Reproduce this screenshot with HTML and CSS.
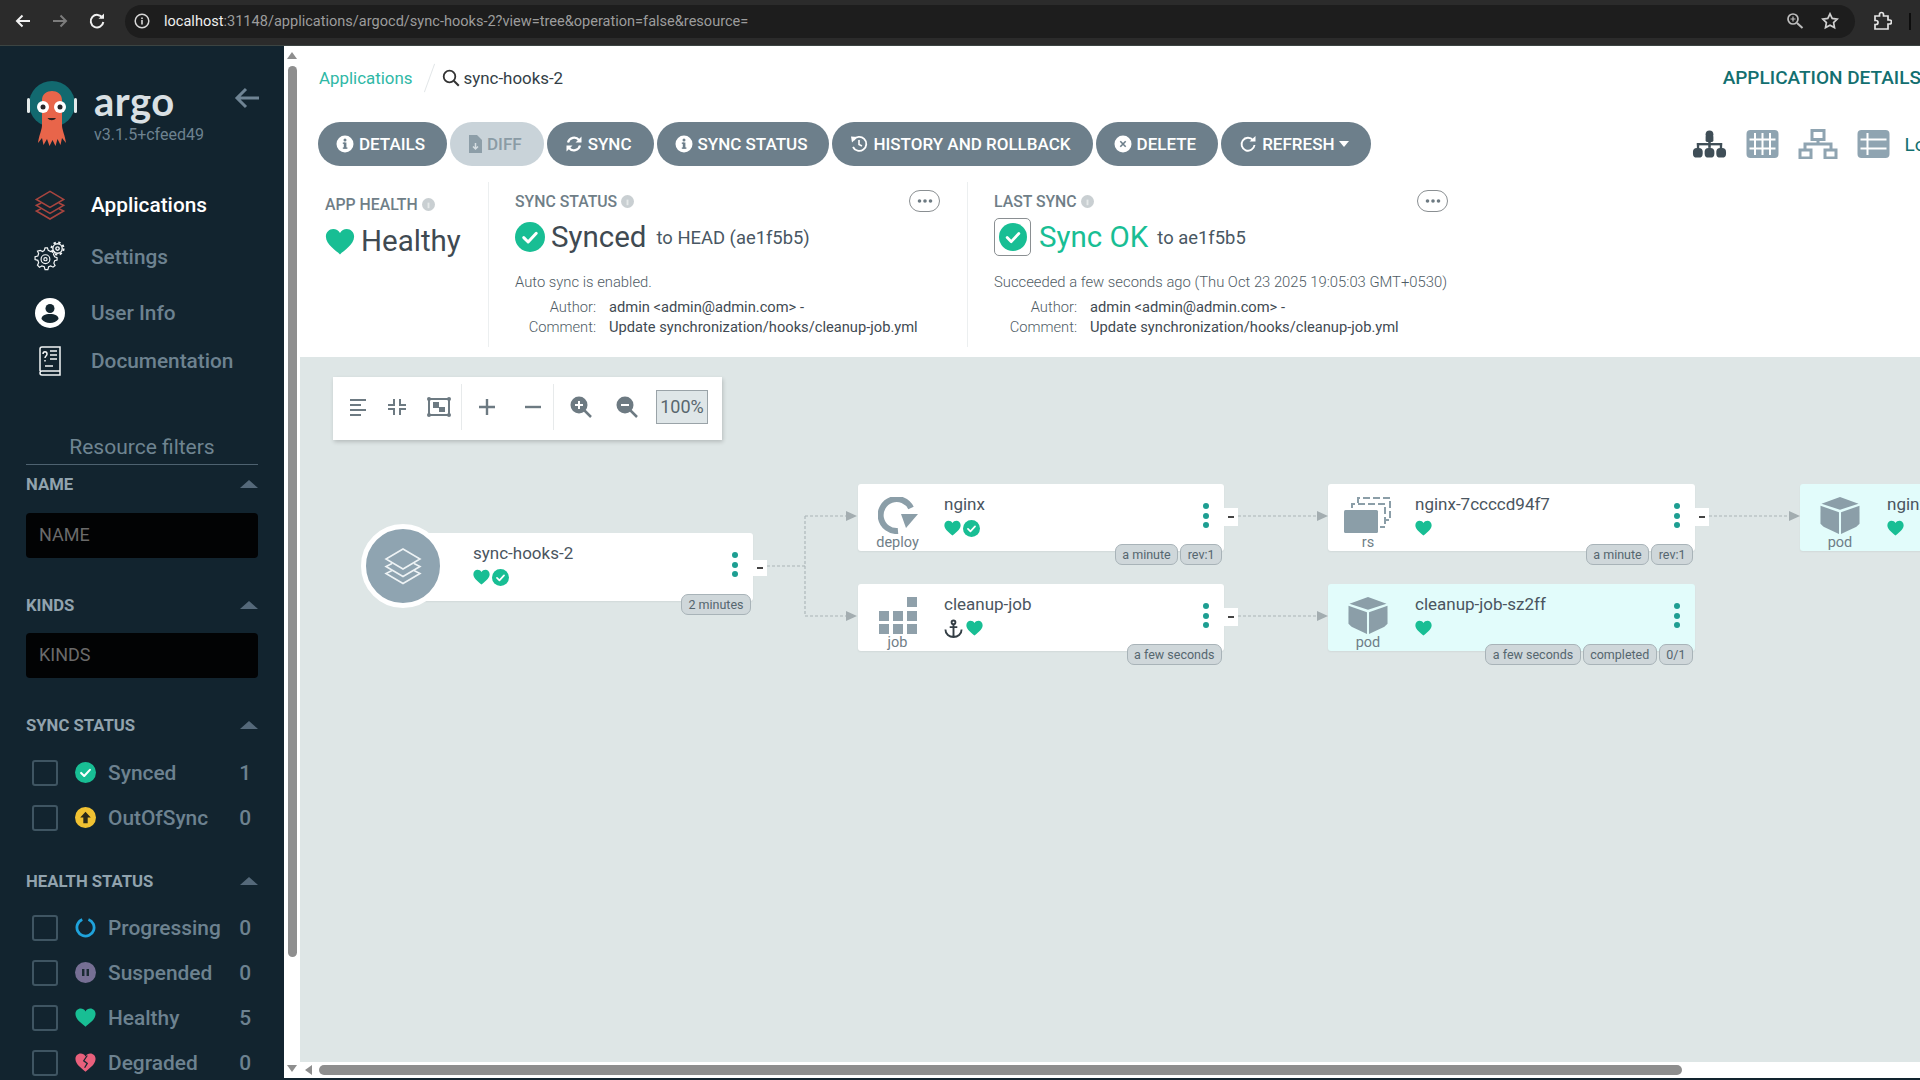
FILE: index.html
```html
<!DOCTYPE html>
<html lang="en">
<head>
<meta charset="utf-8">
<title>sync-hooks-2 - Argo CD</title>
<link rel="stylesheet" href="styles.css">
</head>
<body>
<svg class="defs" width="0" height="0" aria-hidden="true">
  <symbol id="heart" viewBox="0 0 24 22"><path d="M12 21.5C9 18.6 .5 13.6.5 7 .5 3.4 3.2.8 6.5.8c2.300 0 4.300 1.200 5.500 3.200C13.200 2 15.200.8 17.500.8c3.300 0 6 2.600 6 6.200 0 6.600-8.500 11.600-11.500 14.500z"/></symbol>
  <symbol id="check" viewBox="0 0 24 24"><circle cx="12" cy="12" r="12" fill="#18be94"/><path d="M7 12.500l3.500 3.500L17 9" fill="none" stroke="#fff" stroke-width="2.400" stroke-linecap="round" stroke-linejoin="round"/></symbol>
  <symbol id="info" viewBox="0 0 18 18"><circle cx="9" cy="9" r="8.500" fill="currentColor"/><rect x="7.800" y="7.500" width="2.600" height="6" fill="#6d7f8b"/><rect x="6.800" y="7.500" width="2" height="1.400" fill="#6d7f8b"/><rect x="6.800" y="12.400" width="4.600" height="1.400" fill="#6d7f8b"/><circle cx="9" cy="5" r="1.500" fill="#6d7f8b"/></symbol>
  <symbol id="help" viewBox="0 0 14 14"><circle cx="7" cy="7" r="7" fill="#c9cfd2"/><rect x="6" y="5" width="2" height="6" fill="#e6e9ea"/></symbol>
  <symbol id="dots3" viewBox="0 0 16 4"><circle cx="2.500" cy="2" r="1.800"/><circle cx="8" cy="2" r="1.800"/><circle cx="13.500" cy="2" r="1.800"/></symbol>
  <symbol id="pod" viewBox="0 0 38 36"><path d="M19 0L37 6.500 19 12.500 1 6.500z"/><path d="M0 8.500l18 6.300V36L3 29 0 26z"/><path d="M38 8.500l-18 6.300V36l15-7 3-3z"/></symbol>
  <symbol id="stack" viewBox="0 0 40 40"><path d="M20 3L37 13 20 23 3 13z"/><path d="M9 17.500L3 20.500 20 30.500 37 20.500 31 17.500"/><path d="M9 24.500L3 27.500 20 37.500 37 27.500 31 24.500"/></symbol>
</svg>
<div class="app">
  <header class="chrome">
    <svg class="chrome-icon" viewBox="0 0 18 18"><path d="M16 9H3M8.500 3.500L3 9l5.500 5.500" fill="none" stroke="#f1f1f1" stroke-width="2"/></svg>
    <svg class="chrome-icon" viewBox="0 0 18 18"><path d="M2 9h13M9.500 3.500L15 9l-5.500 5.500" fill="none" stroke="#7c7c7c" stroke-width="2"/></svg>
    <svg class="chrome-icon" viewBox="0 0 18 18"><path d="M14.500 6A6.300 6.300 0 1 0 15.300 10" fill="none" stroke="#f1f1f1" stroke-width="2"/><path d="M10.500 6.800H16V1.500z" fill="#f1f1f1"/></svg>
    <div class="omnibox">
      <svg class="omni-info" viewBox="0 0 16 16"><circle cx="8" cy="8" r="6.800" fill="none" stroke="#d8d8d8" stroke-width="1.500"/><rect x="7.200" y="7" width="1.600" height="4.500" fill="#d8d8d8"/><rect x="7.200" y="4.500" width="1.600" height="1.600" fill="#d8d8d8"/></svg>
      <div class="url"><span class="url-host">localhost</span>:31148/applications/argocd/sync-hooks-2?view=tree&amp;operation=false&amp;resource=</div>
      <svg class="omni-action" viewBox="0 0 18 18"><circle cx="7" cy="7" r="5" fill="none" stroke="#bdbdbd" stroke-width="1.700"/><path d="M11 11l5.500 5" stroke="#bdbdbd" stroke-width="2"/><path d="M4.500 7h5M7 4.500v5" stroke="#bdbdbd" stroke-width="1.200"/></svg>
      <svg class="omni-action" viewBox="0 0 18 18"><path d="M9 1.800l2.200 4.600 5 .7-3.600 3.500.9 5L9 13.200l-4.500 2.400.9-5L1.800 7.100l5-.7z" fill="none" stroke="#cfcfcf" stroke-width="1.700"/></svg>
    </div>
    <svg class="chrome-ext" viewBox="0 0 20 20"><path d="M3 5h4.500V3.500a2 2 0 0 1 4 0V5H16v4h1.500a2 2 0 0 1 0 4H16v5H3v-4.500h1a2 2 0 0 0 0-4H3z" fill="none" stroke="#e3e3e3" stroke-width="1.700"/></svg>
    <div class="chrome-sep"></div>
  </header>
  <div class="workspace">
    <aside class="sidebar">
      <div class="brand">
        <svg class="logo" viewBox="0 0 50 66">
          <circle cx="25" cy="23" r="23" fill="#12696f"/>
          <rect x="0" y="17" width="3" height="15" rx="1.500" fill="#e4eaea"/>
          <rect x="47" y="17" width="3" height="15" rx="1.500" fill="#e4eaea"/>
          <path d="M15 19C15 7 35 7 35 19V44C35 49 38 54 39 62L35 57 33.500 64 30.500 58 28.500 65 25.500 59 22.500 65 20 58 16.500 64 15 57 11 62C12 54 15 49 15 44z" fill="#e8654a"/>
          <circle cx="16" cy="26" r="6" fill="#fff"/><circle cx="33" cy="26" r="6" fill="#fff"/>
          <circle cx="16" cy="26" r="2.500" fill="#27262a"/><circle cx="33" cy="26" r="2.500" fill="#27262a"/>
          <path d="M20.500 37c2 3 6.500 3 8.500 0z" fill="#2b2220"/>
        </svg>
        <div class="brand-text">
          <div class="brand-name">argo</div>
          <div class="brand-version">v3.1.5+cfeed49</div>
        </div>
        <svg class="brand-back" viewBox="0 0 26 22"><path d="M25 11H3M12 2l-9 9 9 9" fill="none" stroke="#6f8494" stroke-width="3"/></svg>
      </div>
      <nav class="nav">
        <a class="nav-item active">
          <svg class="nav-icon stack-red" viewBox="0 0 40 40"><path d="M20 3L37 13 20 23 3 13z" fill="#14262f"/><path d="M9 17.500L3 20.500 20 30.500 37 20.500 31 17.500"/><path d="M9 24.500L3 27.500 20 37.500 37 27.500 31 24.500"/></svg>
          <span>Applications</span>
        </a>
        <a class="nav-item">
          <svg class="nav-icon" viewBox="0 0 34 34" fill="none" stroke="#f2f5f6" stroke-width="1.500"><g transform="translate(-1 4) scale(.85)"><path d="M14 7l1-3h3l1 3 3 1.500 3-1.500 2 2-1.500 3 1.500 3 3 1v3l-3 1-1 3 1.500 3-2.500 2-3-1.500-2.500 1-1 3.500h-3.500l-1-3.500-3-1-3 1.500-2.500-2.500 1.500-3-1-3-3.500-1v-3.500l3.500-1 1-3-1.500-3L9 7l3 1.500z"/><circle cx="15.500" cy="18" r="5.500"/><circle cx="15.500" cy="18" r="2"/></g><circle cx="25" cy="8" r="5"/><circle cx="25" cy="8" r="6.500" stroke-width="2" stroke-dasharray="2.500 2.600"/><circle cx="25" cy="8" r="1.800"/></svg>
          <span>Settings</span>
        </a>
        <a class="nav-item">
          <svg class="nav-icon" viewBox="0 0 32 32"><circle cx="16" cy="16" r="15" fill="#fff"/><circle cx="16" cy="11.500" r="4.500" fill="#14262f"/><path d="M7.500 22c0-3.500 3.500-5 8.500-5s8.500 1.500 8.500 5c-2 2.500-5 4-8.500 4s-6.500-1.500-8.500-4z" fill="#14262f"/></svg>
          <span>User Info</span>
        </a>
        <a class="nav-item">
          <svg class="nav-icon" viewBox="0 0 32 32" fill="none" stroke="#f2f5f6" stroke-width="1.500"><path d="M6 26V4a2 2 0 0 1 2-2h18v24H8a2 2 0 0 0 0 4h18v-4"/><path d="M9 9c0-3 4-3 4 0 0 2-2 2-2 4M11 15v1.500M16 6h7M16 10h7M16 14h7M11 21h8"/></svg>
          <span>Documentation</span>
        </a>
      </nav>
      <section class="filters">
        <h2 class="filters-title">Resource filters</h2>
        <div class="filter-head"><span>NAME</span><i class="caret"></i></div>
        <div class="filter-input">NAME</div>
        <div class="filter-head gap"><span>KINDS</span><i class="caret"></i></div>
        <div class="filter-input">KINDS</div>
        <div class="filter-head gap"><span>SYNC STATUS</span><i class="caret"></i></div>
        <ul class="checks first-sync">
          <li class="check-row"><i class="box"></i><svg class="check-icon"><use href="#check"/></svg><span class="check-label">Synced</span><span class="check-count">1</span></li>
          <li class="check-row"><i class="box"></i><svg class="check-icon" viewBox="0 0 24 24"><circle cx="12" cy="12" r="12" fill="#f1c232"/><path d="M12 5.500L18 12h-3.500v6.500h-5V12H6z" fill="#2b2a1a"/></svg><span class="check-label">OutOfSync</span><span class="check-count">0</span></li>
        </ul>
        <div class="filter-head health"><span>HEALTH STATUS</span><i class="caret"></i></div>
        <ul class="checks first-health">
          <li class="check-row"><i class="box"></i><svg class="check-icon" viewBox="0 0 24 24"><circle cx="12" cy="12" r="9.800" fill="none" stroke="#1fa3dc" stroke-width="3.200" stroke-dasharray="54 8" transform="rotate(-70 12 12)"/></svg><span class="check-label">Progressing</span><span class="check-count">0</span></li>
          <li class="check-row"><i class="box"></i><svg class="check-icon" viewBox="0 0 24 24"><circle cx="12" cy="12" r="12" fill="#766f94"/><rect x="8" y="8" width="2.800" height="8" fill="#1a2a33"/><rect x="13.200" y="8" width="2.800" height="8" fill="#1a2a33"/></svg><span class="check-label">Suspended</span><span class="check-count">0</span></li>
          <li class="check-row"><i class="box"></i><svg class="check-icon green"><use href="#heart"/></svg><span class="check-label">Healthy</span><span class="check-count">5</span></li>
          <li class="check-row"><i class="box"></i><svg class="check-icon broken" viewBox="0 0 24 22"><path d="M12 21.500C9 18.600.5 13.600.5 7 .5 3.400 3.200.8 6.500.8c2.300 0 4.300 1.200 5.500 3.200C13.200 2 15.200.8 17.500.8c3.300 0 6 2.600 6 6.200 0 6.600-8.500 11.600-11.500 14.500z"/><path d="M14 3l-4 6 4 3-3 5" fill="none" stroke="#1a2a33" stroke-width="1.500"/></svg><span class="check-label">Degraded</span><span class="check-count">0</span></li>
        </ul>
      </section>
    </aside>
    <div class="main">
      <div class="vscroll">
        <i class="arrow-up"></i>
        <div class="vthumb"></div>
        <i class="arrow-down"></i>
      </div>
      <div class="page">
        <div class="crumbs">
          <a class="crumb-link">Applications</a>
          <i class="crumb-slash"></i>
          <svg class="crumb-search" viewBox="0 0 18 18"><circle cx="7.500" cy="7.500" r="5.800" fill="none" stroke="#333" stroke-width="1.800"/><path d="M11.800 11.800l5 5" stroke="#333" stroke-width="2"/></svg>
          <span class="crumb-current">sync-hooks-2</span>
          <span class="crumb-title">APPLICATION DETAILS</span>
        </div>
        <div class="actions">
          <button class="btn"><svg class="btn-icon"><use href="#info"/></svg>DETAILS</button>
          <button class="btn disabled"><svg class="btn-icon small" viewBox="0 0 14 18"><path d="M1 0h8l5 5v13H1z" fill="#8d9ea8"/><path d="M7.500 8v6M5 11.500l2.500 2.500L10 11.500" fill="none" stroke="#d6dee2" stroke-width="1.500"/></svg>DIFF</button>
          <button class="btn"><svg class="btn-icon" viewBox="0 0 18 18"><path d="M3 7.500A6.300 6.300 0 0 1 14 5M15 10.500A6.300 6.300 0 0 1 4 13" fill="none" stroke="#fff" stroke-width="2.200"/><path d="M16.500 1.500V7.500H10.500zM1.500 16.500V10.500H7.500z" fill="#fff"/></svg>SYNC</button>
          <button class="btn"><svg class="btn-icon"><use href="#info"/></svg>SYNC STATUS</button>
          <button class="btn"><svg class="btn-icon" viewBox="0 0 18 18"><path d="M3.500 5A7 7 0 1 1 3 12" fill="none" stroke="#fff" stroke-width="1.800"/><path d="M1 1.500L7.500 2 2 7.500z" fill="#fff"/><path d="M9 5v4.500l3 1.500" fill="none" stroke="#fff" stroke-width="1.600"/></svg>HISTORY AND ROLLBACK</button>
          <button class="btn"><svg class="btn-icon" viewBox="0 0 18 18"><circle cx="9" cy="9" r="8.500" fill="#fff"/><path d="M6.300 6.300l5.400 5.400M11.700 6.300l-5.400 5.400" stroke="#6d7f8b" stroke-width="1.600"/></svg>DELETE</button>
          <button class="btn"><svg class="btn-icon" viewBox="0 0 18 18"><path d="M14 5A6.500 6.500 0 1 0 15.500 10" fill="none" stroke="#fff" stroke-width="1.900"/><path d="M10.500 6.500H16.500V1z" fill="#fff"/></svg>REFRESH<i class="btn-caret"></i></button>
          <div class="views">
            <svg class="view-icon" viewBox="0 0 36 28" fill="#3f4e57"><circle cx="18" cy="4" r="4"/><rect x="14" y="5" width="8" height="7" rx="1.500"/><rect x="16.700" y="10" width="2.600" height="8"/><rect x="5" y="13" width="26" height="2.400"/><rect x="5" y="13" width="2.400" height="6"/><rect x="28.600" y="13" width="2.400" height="6"/><rect x="1" y="18" width="10" height="10" rx="4"/><rect x="13" y="18" width="10" height="10" rx="4"/><rect x="25" y="18" width="10" height="10" rx="4"/></svg>
            <svg class="view-icon" viewBox="0 0 32 28"><rect width="32" height="28" rx="4" fill="#8fa4b1"/><path d="M8.500 3v22M16 3v22M23.500 3v22M3 9.500h26M3 18.500h26" stroke="#fff" stroke-width="2"/></svg>
            <svg class="view-icon wide" viewBox="0 0 40 30" fill="none" stroke="#8fa4b1" stroke-width="3"><rect x="14" y="1.500" width="12" height="9"/><path d="M20 10.500V15M7 21v-6h26v6"/><rect x="2" y="21" width="11" height="8"/><rect x="27" y="21" width="11" height="8"/></svg>
            <svg class="view-icon" viewBox="0 0 32 28"><rect width="32" height="28" rx="4" fill="#8fa4b1"/><path d="M10 3v22M3 9.500h26M3 18.500h26" stroke="#fff" stroke-width="2"/></svg>
            <span class="views-logs">Logs</span>
          </div>
        </div>
        <div class="status">
          <div class="status-col health-col">
            <div class="status-label"><span>APP HEALTH</span><svg class="help"><use href="#help"/></svg></div>
            <div class="status-big"><svg class="big-heart"><use href="#heart"/></svg><span class="big-text">Healthy</span></div>
          </div>
          <div class="status-col sync-col">
            <div class="status-label between"><span class="label-group"><span>SYNC STATUS</span><svg class="help"><use href="#help"/></svg></span><span class="more"><svg class="more-dots"><use href="#dots3"/></svg></span></div>
            <div class="status-big"><svg class="big-check"><use href="#check"/></svg><span class="big-text">Synced</span><span class="big-sub">to HEAD (ae1f5b5)</span></div>
            <p class="status-note">Auto sync is enabled.</p>
            <dl class="meta">
              <dt>Author:</dt><dd>admin &lt;admin@admin.com&gt; -</dd>
              <dt>Comment:</dt><dd>Update synchronization/hooks/cleanup-job.yml</dd>
            </dl>
          </div>
          <div class="status-col last-col">
            <div class="status-label between"><span class="label-group"><span>LAST SYNC</span><svg class="help"><use href="#help"/></svg></span><span class="more"><svg class="more-dots"><use href="#dots3"/></svg></span></div>
            <div class="status-big"><span class="ok-box"><svg class="ok-check"><use href="#check"/></svg></span><span class="big-text green-text">Sync OK</span><span class="big-sub">to ae1f5b5</span></div>
            <p class="status-note">Succeeded a few seconds ago (Thu Oct 23 2025 19:05:03 GMT+0530)</p>
            <dl class="meta">
              <dt>Author:</dt><dd>admin &lt;admin@admin.com&gt; -</dd>
              <dt>Comment:</dt><dd>Update synchronization/hooks/cleanup-job.yml</dd>
            </dl>
          </div>
        </div>
        <div class="canvas">
          <div class="toolbar">
            <div class="tool-group first">
              <svg class="tool" viewBox="0 0 20 18" stroke="#6d7a82" stroke-width="2"><path d="M1 2h16M1 7h11M1 12h16M1 17h11"/></svg>
              <svg class="tool" viewBox="0 0 20 18" fill="none" stroke="#6d7a82" stroke-width="2"><path d="M7 1v6H1M13 1v6h6M7 17v-6H1M13 17v-6h6"/></svg>
              <svg class="tool big" viewBox="0 0 24 20"><rect x="2" y="2" width="20" height="16" fill="none" stroke="#6d7a82" stroke-width="2"/><circle cx="2" cy="2" r="2" fill="#6d7a82"/><circle cx="22" cy="2" r="2" fill="#6d7a82"/><circle cx="2" cy="18" r="2" fill="#6d7a82"/><circle cx="22" cy="18" r="2" fill="#6d7a82"/><rect x="6" y="5" width="6" height="6" fill="#6d7a82"/><rect x="12" y="10" width="6" height="5" fill="#6d7a82"/></svg>
            </div>
            <div class="tool-group second">
              <svg class="tool" viewBox="0 0 18 18" stroke="#6d7a82" stroke-width="2.400"><path d="M9 1v16M1 9h16"/></svg>
              <svg class="tool" viewBox="0 0 18 18" stroke="#6d7a82" stroke-width="2.400"><path d="M1 9h16"/></svg>
            </div>
            <div class="tool-group last">
              <svg class="tool big" viewBox="0 0 22 22"><circle cx="9" cy="9" r="8.500" fill="#6d7a82"/><path d="M14 14l7 7" stroke="#6d7a82" stroke-width="2.500"/><path d="M9 5v8M5 9h8" stroke="#fff" stroke-width="2"/></svg>
              <svg class="tool big" viewBox="0 0 22 22"><circle cx="9" cy="9" r="8.500" fill="#6d7a82"/><path d="M14 14l7 7" stroke="#6d7a82" stroke-width="2.500"/><path d="M5 9h8" stroke="#fff" stroke-width="2"/></svg>
              <span class="zoom-box">100%</span>
            </div>
          </div>
          <svg class="edges" width="1620" height="700" fill="none">
            <g stroke="#a9b3b6" stroke-width="1.100" stroke-dasharray="3 2">
              <path d="M467 209H505M505 159V259M505 159H548M505 259H548"/>
              <path d="M938 159H1018M938 259H1018M1409 159H1490"/>
            </g>
            <g fill="#a3adb0" stroke="none">
              <path d="M546 154l11 5-11 5zM546 254l11 5-11 5zM1017 154l11 5-11 5zM1017 254l11 5-11 5zM1489 154l11 5-11 5z"/>
            </g>
          </svg>
          <article class="node root-node">
            <div class="root-circle"><svg class="root-icon"><use href="#stack"/></svg></div>
            <div class="node-info">
              <div class="node-name">sync-hooks-2</div>
              <div class="node-status"><svg class="st-heart"><use href="#heart"/></svg><svg class="st-check"><use href="#check"/></svg></div>
            </div>
            <div class="dots"><i></i><i></i><i></i></div>
            <div class="collapser"><i></i></div>
            <div class="tags"><span class="tag">2 minutes</span></div>
          </article>
          <article class="node deploy-node">
            <div class="kind">
              <svg class="kind-icon" viewBox="0 0 40 37"><path d="M33 11A16 16 0 1 0 20 34" fill="none" stroke="#8b9ea8" stroke-width="6"/><path d="M23 17H40L28 31z" fill="#8b9ea8"/></svg>
              <span class="kind-label">deploy</span>
            </div>
            <div class="node-info">
              <div class="node-name">nginx</div>
              <div class="node-status"><svg class="st-heart"><use href="#heart"/></svg><svg class="st-check"><use href="#check"/></svg></div>
            </div>
            <div class="dots"><i></i><i></i><i></i></div>
            <div class="collapser"><i></i></div>
            <div class="tags"><span class="tag">a minute</span><span class="tag">rev:1</span></div>
          </article>
          <article class="node job-node">
            <div class="kind">
              <svg class="kind-icon" viewBox="0 0 38 37" fill="#8fa0aa"><rect x="28" y="0" width="10" height="10"/><rect x="0" y="14" width="10" height="10"/><rect x="14" y="14" width="10" height="10"/><rect x="28" y="14" width="10" height="10"/><rect x="0" y="27" width="10" height="10"/><rect x="14" y="27" width="10" height="10"/><rect x="28" y="27" width="10" height="10"/></svg>
              <span class="kind-label">job</span>
            </div>
            <div class="node-info">
              <div class="node-name">cleanup-job</div>
              <div class="node-status"><svg class="st-anchor" viewBox="0 0 20 20" fill="none" stroke="#333d44" stroke-width="2"><circle cx="10" cy="3.500" r="2"/><path d="M10 5.500V19M6 8.500h8M1.500 11c0 5 4 8 8.500 8s8.500-3 8.500-8"/></svg><svg class="st-heart"><use href="#heart"/></svg></div>
            </div>
            <div class="dots"><i></i><i></i><i></i></div>
            <div class="collapser"><i></i></div>
            <div class="tags"><span class="tag">a few seconds</span></div>
          </article>
          <article class="node rs-node">
            <div class="kind">
              <svg class="kind-icon" viewBox="0 0 48 37" fill="none"><path d="M14 6V1h32v22h-4" stroke="#8b9ea8" stroke-width="2" stroke-dasharray="7 3"/><path d="M8 11V7h33v23h-5" stroke="#8b9ea8" stroke-width="2" stroke-dasharray="7 3"/><rect x="0" y="13" width="34" height="23" rx="1.500" fill="#8b9ea8"/></svg>
              <span class="kind-label">rs</span>
            </div>
            <div class="node-info">
              <div class="node-name">nginx-7ccccd94f7</div>
              <div class="node-status"><svg class="st-heart"><use href="#heart"/></svg></div>
            </div>
            <div class="dots"><i></i><i></i><i></i></div>
            <div class="collapser"><i></i></div>
            <div class="tags"><span class="tag">a minute</span><span class="tag">rev:1</span></div>
          </article>
          <article class="node pod-node cleanup-pod">
            <div class="kind">
              <svg class="kind-icon solid"><use href="#pod"/></svg>
              <span class="kind-label">pod</span>
            </div>
            <div class="node-info">
              <div class="node-name">cleanup-job-sz2ff</div>
              <div class="node-status"><svg class="st-heart"><use href="#heart"/></svg></div>
            </div>
            <div class="dots"><i></i><i></i><i></i></div>
            <div class="tags"><span class="tag">a few seconds</span><span class="tag">completed</span><span class="tag">0/1</span></div>
          </article>
          <article class="node pod-node nginx-pod">
            <div class="kind">
              <svg class="kind-icon solid"><use href="#pod"/></svg>
              <span class="kind-label">pod</span>
            </div>
            <div class="node-info">
              <div class="node-name">nginx-7ccccd94f7-kx2lp</div>
              <div class="node-status"><svg class="st-heart"><use href="#heart"/></svg></div>
            </div>
          </article>
        </div>
        <div class="hscroll">
          <i class="arrow-left"></i>
          <div class="hthumb"></div>
        </div>
      </div>
    </div>
  </div>
</div>
</body>
</html>
```

FILE: styles.css
```css
* { box-sizing: border-box; }
html, body { margin: 0; height: 100%; overflow: hidden; }
body { font-family: Roboto, "Liberation Sans", sans-serif; color: #495763; background: #12242f; }
.defs { position: absolute; }
.app { display: flex; flex-direction: column; width: 1920px; height: 1080px; overflow: hidden; }

/* browser chrome */
.chrome { flex: none; height: 46px; display: flex; align-items: center; background: #2b2b2b; border-bottom: 1px solid #3c4442; padding: 0 0 3px 14px; }
.chrome-icon { width: 18px; height: 18px; margin-right: 19px; flex: none; }
.omnibox { flex: none; width: 1730px; height: 33px; border-radius: 17px; background: #1d1d1d; display: flex; align-items: center; padding-left: 9px; padding-right: 16px; }
.omni-info { width: 16px; height: 16px; flex: none; }
.url { margin-left: 14px; font-size: 14.560px; color: #9c9c9c; flex: 1; white-space: nowrap; }
.url-host { color: #efefef; }
.omni-action { width: 18px; height: 18px; margin-left: 17px; flex: none; }
.chrome-ext { width: 20px; height: 20px; margin-left: 17px; flex: none; }
.chrome-sep { width: 2px; height: 17px; margin-left: 17px; background: #0d0d0d; }

.workspace { flex: 1; min-height: 0; display: flex; }

/* sidebar */
.sidebar { flex: none; width: 284px; background: #12242f; overflow: hidden; }
.brand { height: 132px; display: flex; align-items: flex-start; padding: 35px 24px 0 27px; }
.logo { width: 50px; height: 66px; flex: none; }
.brand-text { margin-left: 17px; }
.brand-name { font-family: Lato, sans-serif; font-size: 40px; font-weight: 700; line-height: 36px; margin-top: 2px; color: #d9e0e4; letter-spacing: .5px; }
.brand-version { font-size: 16px; line-height: 18px; margin-top: 7px; color: #6d8290; white-space: nowrap; }
.brand-back { width: 26px; height: 22px; margin-left: auto; margin-top: 6px; flex: none; }

.nav { display: grid; grid-template-rows: 54px 50px 62px 33px; margin-bottom: -1px; }
.nav-item { display: flex; align-items: center; padding-left: 34px; font-size: 20.800px; font-weight: 500; color: #6d8290; }
.nav-item.active { color: #fff; }
.nav-icon { width: 32px; height: 32px; margin-right: 25px; flex: none; }
.stack-red { fill: none; stroke: #a8453f; stroke-width: 2; }

.filters { margin: 59px 26px 0; }
.filters-title { margin: 0; padding-bottom: 5px; height: 30px; border-bottom: 1px solid #4e6270; font-size: 21px; line-height: 24px; font-weight: 400; text-align: center; color: #6f8491; }
.filter-head { height: 38px; display: flex; align-items: center; justify-content: space-between; font-size: 16.700px; font-weight: 700; color: #91a3ae; }
.filter-head.gap { margin-top: 28px; }
.filter-head.health { margin-top: 22px; }
.caret { width: 0; height: 0; border-left: 9px solid transparent; border-right: 9px solid transparent; border-bottom: 8px solid #55697a; }
.filter-input { height: 45px; margin-top: 10px; background: #020304; border-radius: 4px; padding: 0 0 2px 13px; display: flex; align-items: center; font-size: 18px; color: #6a6a6a; }
.filter-head.gap + .filter-input { margin-top: 9px; }
.checks { list-style: none; margin: 0; padding: 0; }
.first-sync { margin-top: 6px; }
.first-health { margin-top: 5px; }
.check-row { height: 45px; display: flex; align-items: center; padding-left: 6px; font-size: 20.900px; font-weight: 500; color: #6d8290; }
.box { width: 26px; height: 26px; flex: none; border: 2px solid #3f5562; border-radius: 3px; margin-right: 17px; }
.check-icon { width: 21px; height: 21px; flex: none; margin-right: 12px; }
.check-icon.green { fill: #18be94; }
.check-icon.broken { fill: #e9607c; }
.check-label { flex: 1; }
.check-count { margin-right: 7px; }

/* main */
.main { flex: 1; min-width: 0; display: flex; margin-bottom: 2px; background: #fff; }
.vscroll { flex: none; width: 16px; background: #fff; display: flex; flex-direction: column; align-items: center; padding: 6px 0 6px; }
.arrow-up { width: 0; height: 0; border-left: 5px solid transparent; border-right: 5px solid transparent; border-bottom: 7px solid #8e8e8e; }
.arrow-down { width: 0; height: 0; margin-top: auto; border-left: 5px solid transparent; border-right: 5px solid transparent; border-top: 7px solid #8e8e8e; }
.vthumb { width: 9px; height: 891px; margin-top: 7px; border-radius: 5px; background: #8e8e8e; }
.page { flex: 1; min-width: 0; overflow: hidden; display: flex; flex-direction: column; background: #fff; }

.crumbs { flex: none; width: 1621px; height: 62px; display: flex; align-items: center; padding: 1px 0 0 19px; font-size: 16.900px; }
.crumb-link { color: #2fb8a6; }
.crumb-slash { width: 1px; height: 30px; margin: 0 12px 0 16px; background: #e2e6e8; transform: rotate(20deg); }
.crumb-search { width: 18px; height: 18px; margin-right: 4px; }
.crumb-current { color: #333e46; font-weight: 400; }
.crumb-title { margin-left: auto; font-size: 19px; font-weight: 500; color: #136f70; white-space: nowrap; }

.actions { flex: none; width: 1646px; height: 72px; display: flex; align-items: center; padding-left: 18px; gap: 3px; }
.btn { flex: none; height: 44px; border: 0; border-radius: 22px; background: #6d7f8b; color: #fff; font: 500 17px Roboto, sans-serif; padding: 0 22px 0 18px; display: flex; align-items: center; }
.btn.disabled { background: #c9d3d9; color: #8a9ba5; }
.btn-icon { width: 18px; height: 18px; margin-right: 5px; flex: none; color: #fff; }
.btn-icon.small { width: 14px; }
.btn-caret { width: 0; height: 0; margin-left: 5px; border-left: 5px solid transparent; border-right: 5px solid transparent; border-top: 6px solid #fff; }
.views { margin-left: auto; display: flex; align-items: center; gap: 18px; }
.view-icon { width: 35px; height: 28px; flex: none; }
.view-icon.wide { width: 40px; height: 30px; }
.views-logs { font-size: 19px; color: #136f70; margin-left: -5px; }

.status { flex: none; height: 177px; display: flex; align-items: flex-start; background: #fff; }
.status-col { flex: none; height: 165px; margin-top: 2px; }
.health-col { width: 188px; padding-left: 25px; padding-top: 11px; }
.health-col .status-big { margin-top: 6px; }
.sync-col { width: 479px; padding: 8px 27px 0 26px; border-left: 1px solid #eceff0; }
.last-col { width: 481px; padding: 8px 0 0 26px; border-left: 1px solid #eceff0; }
.status-label { display: flex; align-items: center; height: 22px; font-size: 15.800px; font-weight: 500; color: #6f7e87; white-space: nowrap; }
.status-label.between { justify-content: space-between; }
.label-group { display: flex; align-items: center; }
.help { width: 13px; height: 13px; margin-left: 4px; }
.more { width: 31px; height: 22px; border: 1px solid #8a8f92; border-radius: 11px; display: flex; align-items: center; justify-content: center; background: #fff; }
.more-dots { width: 16px; height: 4px; fill: #6d7a82; }
.status-big { display: flex; align-items: center; height: 40px; margin-top: 5px; }
.big-heart { width: 30px; height: 27px; margin-right: 6px; fill: #18be94; }
.big-check { width: 30px; height: 30px; margin-right: 6px; }
.big-text { font-size: 29.500px; color: #3f4a52; white-space: nowrap; }
.green-text { color: #18be94; }
.big-sub { margin-left: 10px; font-size: 18.400px; color: #495763; white-space: nowrap; }
.last-col .big-sub { margin-left: 9px; }
.ok-box { width: 37px; height: 38px; margin-right: 8px; border: 1px solid #8a8f92; border-radius: 5px; display: flex; align-items: center; justify-content: center; flex: none; }
.ok-check { width: 28px; height: 28px; }
.status-note { margin: 14.800px 0 0; height: 20px; font-size: 14.800px; line-height: 20px; font-weight: 300; color: #4f5c65; white-space: nowrap; }
.meta { margin: 5px 0 0; display: grid; grid-template-columns: 81px auto; column-gap: 13px; row-gap: .5px; font-size: 14.700px; line-height: 20px; }
.last-col .meta { grid-template-columns: 83px auto; }
.meta dt { text-align: right; font-weight: 300; color: #4f5c65; }
.meta dd { margin: 0; color: #3f4a52; white-space: nowrap; }

/* graph canvas */
.canvas { flex: 1; min-height: 0; position: relative; background: #dee6e6; overflow: hidden; padding: 20px 0 0 33px; }
.toolbar { position: relative; z-index: 3; width: 389px; height: 63px; background: #fff; box-shadow: 1px 2px 4px rgba(0, 0, 0, .18); display: flex; align-items: center; padding: 0 0 4px 16px; }
.tool-group { display: flex; align-items: center; height: 46px; gap: 18px; padding-right: 12px; margin-right: 15px; border-right: 1px solid #e7eaeb; }
.tool-group.first { padding-right: 10px; }
.tool-group.first .tool.big { margin-left: 2px; }
.tool-group.second { gap: 26px; padding-right: 10px; }
.tool-group.last { border-right: 0; gap: 22px; padding: 0; margin: 0; }
.tool { width: 20px; height: 18px; flex: none; }
.tool.big { width: 24px; height: 22px; }
.zoom-box { width: 52px; height: 34px; margin-left: -5px; border: 1px solid #9aa3a8; background: #dfe6e8; display: flex; align-items: center; justify-content: center; font-size: 18px; color: #59666e; }

.edges { position: absolute; left: 0; top: 0; }
.node { position: absolute; display: flex; width: 367px; height: 67px; background: #fff; border-radius: 3px; box-shadow: 0 1px 2px rgba(0, 0, 0, .06); }
.root-node { left: 103px; top: 176px; width: 350px; height: 68px; padding-left: 70px; }
.deploy-node { left: 558px; top: 127px; width: 366px; }
.job-node { left: 558px; top: 227px; width: 366px; }
.rs-node { left: 1028px; top: 127px; }
.cleanup-pod { left: 1028px; top: 227px; }
.nginx-pod { left: 1500px; top: 127px; }
.pod-node { background: #e2fcfb; }
.root-circle { position: absolute; left: -42px; top: -9px; width: 84px; height: 84px; border-radius: 50%; border: 5px solid #fff; background: #8fa4b1; display: flex; align-items: center; justify-content: center; }
.root-icon { width: 40px; height: 40px; fill: none; stroke: #eef3f5; stroke-width: 1.600; }
.kind { flex: none; width: 87px; height: 67px; position: relative; display: flex; flex-direction: column; align-items: center; padding: 13px 8px 0 0; }
.deploy-node .kind, .job-node .kind { width: 86px; padding-right: 7px; }
.kind-icon { width: 40px; height: 37px; flex: none; }
.kind-icon.solid { fill: #8b9ea8; }
.kind-label { position: absolute; left: 0; right: 7px; top: 49px; text-align: center; font-size: 14.500px; line-height: 20px; color: #6f7e87; }
.rs-node .kind-icon { width: 48px; }
.node-info { padding-top: 8px; }
.node-name { font-size: 17px; line-height: 24px; color: #4a5560; white-space: nowrap; }
.node-status { display: flex; align-items: center; gap: 2px; height: 20px; margin-top: 2px; }
.st-heart { width: 17px; height: 16px; fill: #18be94; }
.st-check { width: 17px; height: 17px; }
.st-anchor { width: 19px; height: 19px; margin-right: 1px; }
.dots { position: absolute; right: 15px; top: 19px; display: flex; flex-direction: column; gap: 3.500px; }
.dots i { width: 6px; height: 6px; border-radius: 50%; background: #1d9e92; }
.collapser { position: absolute; right: -14px; top: 24px; width: 14px; height: 18px; background: #fff; display: flex; align-items: center; justify-content: center; }
.root-node .collapser { top: 27px; height: 16px; }
.collapser i { width: 6px; height: 1.500px; background: #444; }
.tags { position: absolute; right: 2px; bottom: -14px; display: flex; gap: 2px; }
.tag { height: 21px; padding: 0 6.500px; border: 1px solid #a8b3b8; border-radius: 7px; background: #cfd7da; font-size: 12.500px; line-height: 19px; color: #55666f; white-space: nowrap; }

.hscroll { flex: none; height: 16px; background: #fff; display: flex; align-items: center; padding-left: 5px; }
.arrow-left { width: 0; height: 0; border-top: 5px solid transparent; border-bottom: 5px solid transparent; border-right: 7px solid #8e8e8e; }
.hthumb { width: 1363px; height: 10px; margin-left: 7px; border-radius: 5px; background: #8e8e8e; }
```
